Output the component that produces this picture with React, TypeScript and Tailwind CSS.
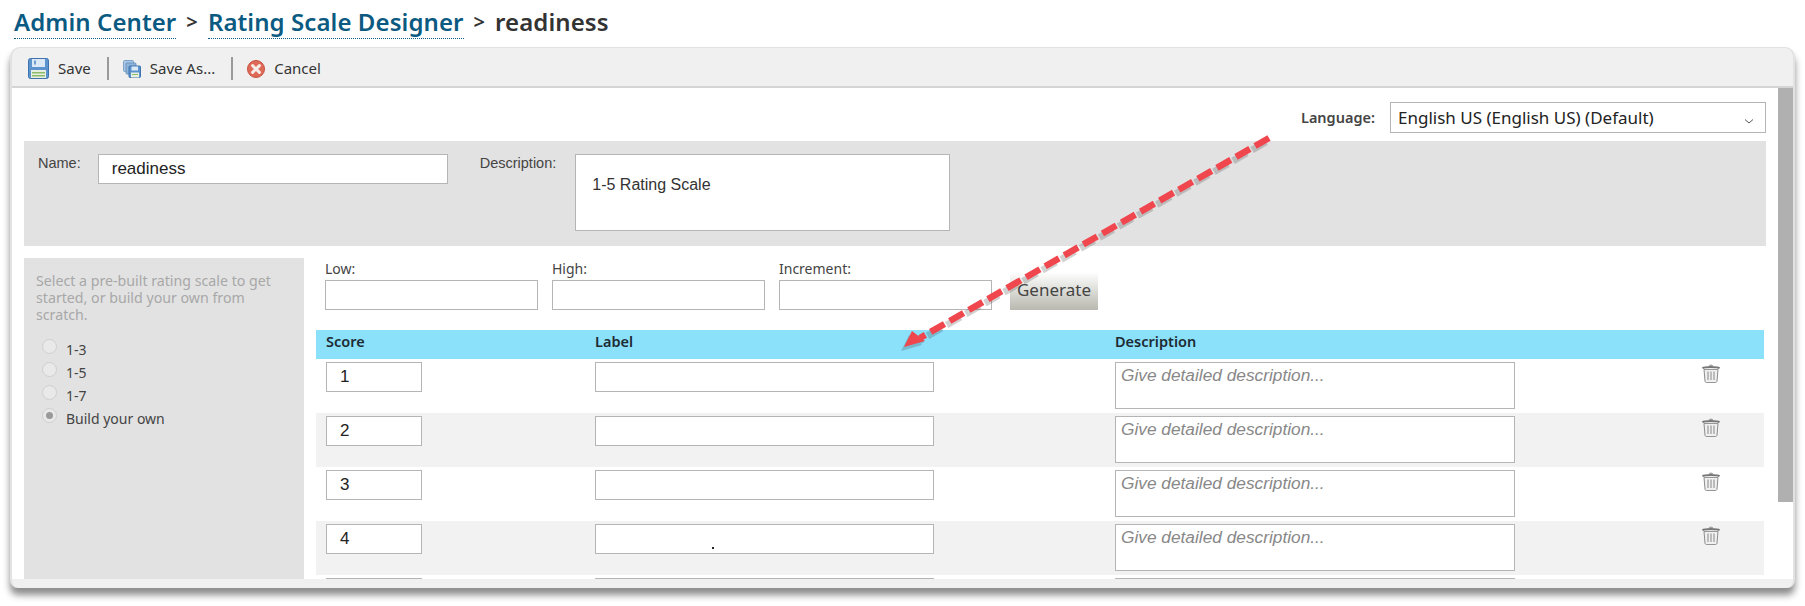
import React from 'react';

const fieldBorder = 'border border-[#b5b5b5] bg-white';

function SaveIcon() {
  return (
    <svg width="21" height="21" viewBox="0 0 21 21">
      <rect x="0.5" y="0.5" width="20" height="20" rx="2" fill="#5b93cf" stroke="#3f73ad" />
      <rect x="4" y="1" width="13" height="8" fill="#dbe9f6" />
      <rect x="6" y="2.5" width="2" height="4" fill="#6f9fd0" />
      <rect x="3" y="12" width="15" height="8" fill="#e6efe0" />
      <rect x="4" y="14" width="13" height="1.5" fill="#8dbb6c" />
      <rect x="4" y="17" width="13" height="1.5" fill="#8dbb6c" />
    </svg>
  );
}

function SaveAsIcon() {
  return (
    <svg width="18" height="18" viewBox="0 0 18 18">
      <rect x="0.5" y="0.5" width="10" height="11" rx="1" fill="#a9c6e4" stroke="#7ea3c9" />
      <rect x="3" y="3" width="10" height="11" rx="1" fill="#8fb4da" stroke="#6c94bf" />
      <rect x="6" y="6" width="11.5" height="11.5" rx="1" fill="#5b93cf" stroke="#3f73ad" />
      <rect x="8.5" y="6.5" width="6.5" height="4" fill="#dbe9f6" />
      <rect x="8" y="12.5" width="8" height="5" fill="#e6efe0" />
      <rect x="9" y="14" width="6" height="1" fill="#8dbb6c" />
    </svg>
  );
}

function CancelIcon() {
  return (
    <svg width="18" height="18" viewBox="0 0 18 18">
      <circle cx="9" cy="9" r="8.5" fill="#de6a58" stroke="#c9503f" />
      <path d="M5.6 5.6 12.4 12.4M12.4 5.6 5.6 12.4" stroke="#f6ece8" strokeWidth="3" strokeLinecap="round" />
    </svg>
  );
}

function TrashIcon() {
  return (
    <svg width="18" height="19" viewBox="0 0 18 19" fill="none">
      <path d="M7 2.2C7 .8 11 .8 11 2.2" stroke="#888" />
      <path d="M.6 4.4C2 2.6 16 2.6 17.4 4.4" stroke="#777" strokeWidth="2" />
      <path d="M2 5.4 3 17c.1 1.2 1 1.6 2 1.6h8c1 0 1.900-.4 2-1.600L16 5.400Z" fill="#f0f0f0" stroke="#8c8c8c" />
      <path d="M6 7.500V16M9 7.500V16M12 7.500V16" stroke="#b0b0b0" strokeWidth="1.600" />
    </svg>
  );
}

function Radio({ label, checked }: { label: string; checked?: boolean }) {
  return (
    <div className="flex h-[23px] items-start">
      <span className="ml-[6px] flex h-[15px] w-[15px] items-center justify-center rounded-full border border-[#cfcfcf] bg-[#e9e9e9]">
        {checked && <span className="h-[7px] w-[7px] rounded-full bg-[#9a9a9a]" />}
      </span>
      <span className="ml-[9px] mt-[1px] text-[14px] leading-[20px] text-[#444]">{label}</span>
    </div>
  );
}

function ScaleRow({ score, shaded, speck }: { score: number; shaded: boolean; speck?: boolean }) {
  return (
    <div className={`grid h-[54px] grid-cols-[269px_520px_587px_1fr] pl-[10px] pt-[3px] ${shaded ? 'bg-[#f2f2f2]' : 'bg-white'}`}>
      <div>
        <input
          readOnly
          value={score}
          className={`h-[30px] w-[96px] pl-[13px] font-['Liberation_Sans',sans-serif] text-[17px] text-[#222] ${fieldBorder}`}
        />
      </div>
      <div className="relative">
        <input readOnly className={`h-[30px] w-[339px] ${fieldBorder}`} />
        {speck && <span className="absolute left-[117px] top-[23px] h-[2px] w-[2px] bg-[#222]" />}
      </div>
      <div>
        <textarea
          readOnly
          placeholder="Give detailed description..."
          className={`h-[47px] w-[400px] resize-none border-[#9c9c9c] px-[5px] py-0 font-['Liberation_Sans',sans-serif] text-[17.300px] italic placeholder:text-[#888] ${fieldBorder}`}
        />
      </div>
      <div className="pt-[2px]">
        <TrashIcon />
      </div>
    </div>
  );
}

export default function App() {
  return (
    <div className="relative h-[606px] w-[1805px] overflow-hidden bg-white font-['Noto_Sans',sans-serif]">
      {/* Breadcrumb */}
      <div className="flex h-[47px] items-start pl-[14px] pt-[6px] text-[24px] font-semibold leading-[32px] tracking-[0.08px] text-[#333]">
        <a className="border-b border-dotted border-[#0b5a82] text-[#0b5a82]">Admin Center</a>
        <span className="mx-[10px] text-[20px]">&gt;</span>
        <a className="border-b border-dotted border-[#0b5a82] text-[#0b5a82]">Rating Scale Designer</a>
        <span className="mx-[10px] text-[20px]">&gt;</span>
        <span>readiness</span>
      </div>

      <div className="ml-[10px] h-[541px] w-[1785px] rounded-t-[10px] rounded-b-[8px] border-x-2 border-t border-[#e2e2e2] bg-[#f0f0f0] shadow-[0_7px_7px_rgba(0,0,0,0.45)]">
        {/* Toolbar */}
        <div className="flex h-[40px] items-center border-b-2 border-[#d4d4d4] pl-[16px] pt-[3px] text-[15px] text-[#333]">
          <SaveIcon />
          <span className="ml-[9px]">Save</span>
          <span className="ml-[16px] h-[23px] w-[2px] bg-[#9a9a9a]" />
          <span className="ml-[14px]"><SaveAsIcon /></span>
          <span className="ml-[9px]">Save As...</span>
          <span className="ml-[16px] h-[23px] w-[2px] bg-[#9a9a9a]" />
          <span className="ml-[14px]"><CancelIcon /></span>
          <span className="ml-[9px]">Cancel</span>
        </div>

        <div className="flex h-[491px] bg-white">
          <div className="h-[491px] w-[1766px] overflow-hidden px-[12px]">
            {/* Language */}
            <div className="flex h-[53px] justify-end pt-[14px]">
              <div className="flex h-[31px] items-center">
                <span className="mr-[15px] text-[14.500px] font-semibold text-[#444]">Language:</span>
                <div className={`flex h-[31px] w-[376px] items-center justify-between pl-[7px] pr-[10px] text-[17px] text-[#222] ${fieldBorder}`}>
                  <span>English US (English US) (Default)</span>
                  <svg width="12" height="12" viewBox="0 0 12 12" fill="none" className="mt-[7px]">
                    <path d="M2 4.500 6 8l4-3.500" stroke="#555" />
                  </svg>
                </div>
              </div>
            </div>

            {/* Name and description */}
            <div className="flex h-[105px] items-start bg-[#e2e2e2] pl-[14px] pt-[13px] font-['Liberation_Sans',sans-serif] text-[14.500px] text-[#444]">
              <span className="-mt-[1px]">Name:</span>
              <input
                readOnly
                value="readiness"
                className={`ml-[17px] h-[30px] w-[350px] pl-[13px] text-[17px] text-[#222] ${fieldBorder}`}
              />
              <span className="ml-[32px] -mt-[1px]">Description:</span>
              <div className={`ml-[19px] h-[77px] w-[375px] pl-[16px] pt-[18px] text-[16px] text-[#333] ${fieldBorder}`}>
                1-5 Rating Scale
              </div>
            </div>

            <div className="mt-[12px] flex">
              {/* Pre-built scales */}
              <div className="h-[321px] w-[280px] bg-[#e2e2e2] pl-[12px] pt-[14px]">
                <p className="w-[262px] text-[14.200px] leading-[17px] text-[#a8a8a8]">
                  Select a pre-built rating scale to get started, or build your own from scratch.
                </p>
                <div className="mt-[16px]">
                  <Radio label="1-3" />
                  <Radio label="1-5" />
                  <Radio label="1-7" />
                  <Radio label="Build your own" checked />
                </div>
              </div>

              {/* Generator and table */}
              <div className="ml-[12px] w-[1448px]">
                <div className="flex h-[72px] items-end gap-[14px] pb-[20px] pl-[9px] text-[14px] text-[#444]">
                  {['Low:', 'High:', 'Increment:'].map(l => (
                    <label key={l} className="block">
                      <span className="block h-[22px] leading-[22px]">{l}</span>
                      <input readOnly className={`block h-[30px] w-[213px] ${fieldBorder}`} />
                    </label>
                  ))}
                  <button className="ml-[4px] h-[38px] w-[88px] bg-gradient-to-b from-[#ffffff] to-[#b9b9b0] pb-[2px] text-[17px] text-[#444]">
                    Generate
                  </button>
                </div>

                <div className="grid h-[29px] grid-cols-[269px_520px_1fr] items-center bg-[#8be0fa] pb-[6px] pl-[10px] text-[14.500px] font-semibold text-[#1d2b33]">
                  <span>Score</span>
                  <span>Label</span>
                  <span>Description</span>
                </div>
                <ScaleRow score={1} shaded={false} />
                <ScaleRow score={2} shaded />
                <ScaleRow score={3} shaded={false} />
                <ScaleRow score={4} shaded speck />
                <ScaleRow score={5} shaded={false} />
              </div>
            </div>
          </div>

          {/* Scrollbar */}
          <div className="w-[15px]">
            <div className="h-[414px] w-[15px] bg-[#b0b0b0]" />
          </div>
        </div>
      </div>

      {/* Annotation arrow */}
      <svg className="pointer-events-none absolute left-0 top-0" width="1805" height="606" viewBox="0 0 1805 606" fill="none">
        <g transform="translate(-3 4)" opacity="0.22">
          <path d="M1269 138 920 338" stroke="#333" strokeWidth="7" strokeDasharray="16 6" />
          <path d="M904 347 912 331 925 341Z" fill="#333" />
        </g>
        <path d="M1269 138 920 338" stroke="#f0474f" strokeWidth="6.500" strokeDasharray="16 6" />
        <path d="M904 347 912 331 925 341Z" fill="#f0474f" />
      </svg>
    </div>
  );
}
